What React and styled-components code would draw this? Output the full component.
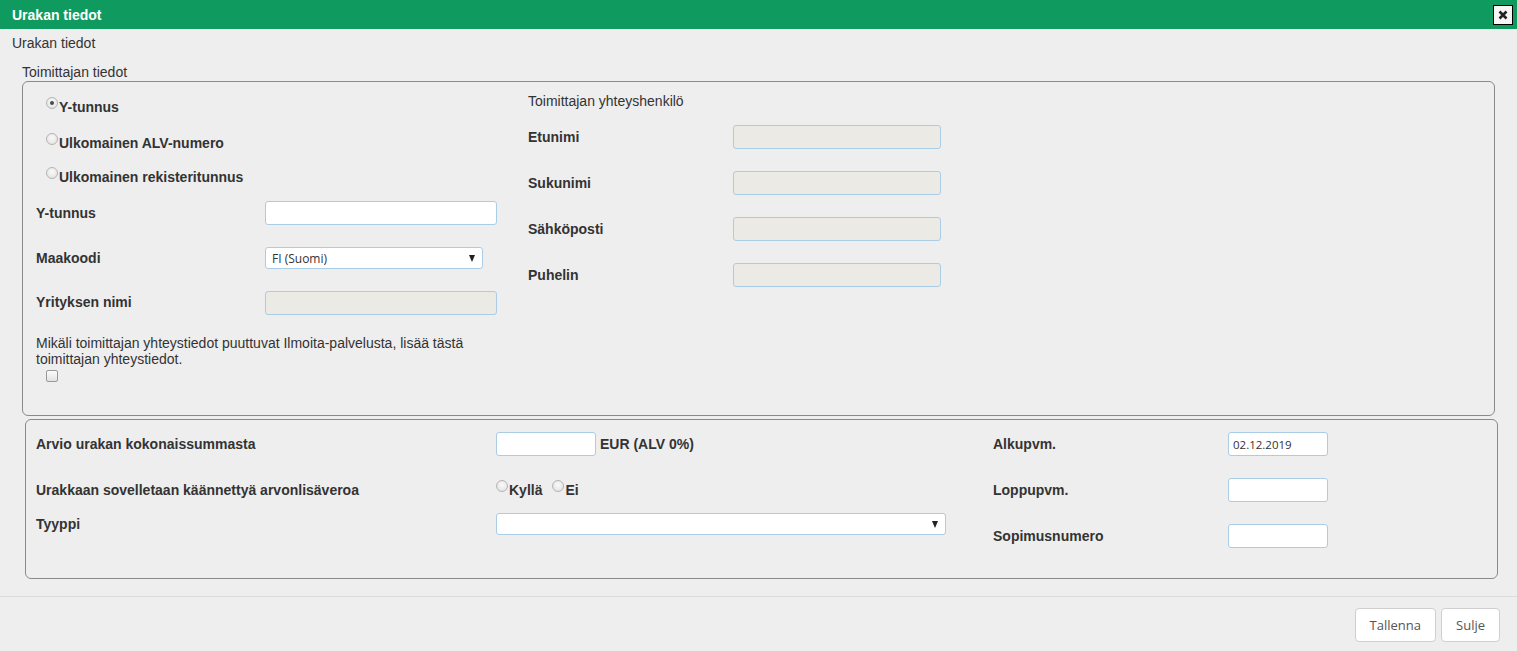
import React from 'react';
import styled, { createGlobalStyle } from 'styled-components';

const GlobalStyle = createGlobalStyle`
  html, body {
    margin: 0;
    padding: 0;
    background: #eeeeee;
    font-family: "Liberation Sans", Arial, sans-serif;
    color: #333;
    overflow: hidden;
  }
`;

const Page = styled.div`
  width: 1517px;
  height: 651px;
  background: #eeeeee;
  display: flex;
  flex-direction: column;
`;

const Header = styled.div`
  height: 29px;
  background: #0f9a60;
  display: flex;
  align-items: center;
  justify-content: space-between;
  padding: 0 4px 0 12px;
  box-sizing: border-box;
`;

const HeaderTitle = styled.div`
  color: #fff;
  font-weight: bold;
  font-size: 14px;
`;

const CloseButton = styled.button`
  width: 20px;
  height: 20px;
  padding: 0;
  border: 1px solid #000;
  background: #f6f6f6;
  display: flex;
  align-items: center;
  justify-content: center;
  box-sizing: border-box;
`;

const PageTitle = styled.div`
  font-size: 14px;
  line-height: 16px;
  margin: 6px 0 0 12px;
`;

const Legend = styled.div`
  font-size: 14px;
  line-height: 16px;
  margin: 13px 0 0 22px;
`;

const Fieldset = styled.div`
  border: 1px solid #8a8a8a;
  border-radius: 6px;
  margin: ${p => p.$margin};
  padding: ${p => p.$padding};
  display: flex;
`;

const Column = styled.div`
  display: flex;
  flex-direction: column;
  width: ${p => p.$w}px;
`;

const Row = styled.div`
  display: flex;
  align-items: center;
  height: ${p => p.$h || 24}px;
  margin-top: ${p => p.$mt || 0}px;
`;

const Label = styled.div`
  font-weight: bold;
  font-size: 14px;
  width: ${p => p.$w}px;
  flex-shrink: 0;
  margin-top: ${p => p.$up ? -3 : -1}px;
  margin-left: ${p => p.$ml || 0}px;
`;

const SubHeading = styled.div`
  font-size: 14px;
  line-height: 16px;
  margin-top: ${p => p.$mt}px;
`;

const Note = styled.div`
  font-size: 14px;
  line-height: 16px;
  margin-top: ${p => p.$mt}px;
  width: 460px;
`;

const TextInput = styled.div`
  width: ${p => p.$w}px;
  height: 24px;
  box-sizing: border-box;
  border: 1px solid #a9cde6;
  border-radius: 3px;
  background: ${p => p.$disabled ? '#ebeae4' : '#fff'};
  font-family: "Open Sans", sans-serif;
  font-size: 11.5px;
  display: flex;
  align-items: center;
  padding-left: 4px;
`;

const Select = styled.div`
  width: ${p => p.$w}px;
  height: 22px;
  box-sizing: border-box;
  border: 1px solid #a9cde6;
  border-radius: 3px;
  background: #fff;
  font-family: "Open Sans", sans-serif;
  font-size: 12px;
  display: flex;
  align-items: center;
  justify-content: space-between;
  padding: 0 7px 0 6px;
`;

const Arrow = styled.span`
  width: 0;
  height: 0;
  border-left: 3.5px solid transparent;
  border-right: 3.5px solid transparent;
  border-top: 7px solid #222;
`;

const RadioLabel = styled.label`
  display: flex;
  align-items: center;
  font-weight: bold;
  font-size: 14px;
  margin-left: ${p => p.$ml || 0}px;
`;

const RadioDot = styled.span`
  width: 12px;
  height: 12px;
  box-sizing: border-box;
  border-radius: 50%;
  border: 1px solid #b4b4b4;
  background: radial-gradient(circle at 50% 40%, #fafafa, #dedede);
  margin-top: -8px;
  margin-right: 1px;
  display: flex;
  align-items: center;
  justify-content: center;
  &::after {
    content: '';
    width: 4px;
    height: 4px;
    border-radius: 50%;
    background: ${p => p.$checked ? '#4a4a4a' : 'transparent'};
  }
`;

const Checkbox = styled.span`
  display: block;
  width: 12px;
  height: 12px;
  box-sizing: border-box;
  border: 1px solid #999;
  border-radius: 2px;
  background: linear-gradient(#fbfbfb, #e2e2e2);
  margin: 3px 0 0 10px;
`;

const Divider = styled.div`
  height: 1px;
  background: #dcdcdc;
  margin-top: 17px;
`;

const Footer = styled.div`
  display: flex;
  justify-content: flex-end;
  gap: 5px;
  padding: 11px 17px 0 0;
`;

const Button = styled.button`
  height: 34px;
  padding: 0 14px;
  border: 1px solid #cfcfcf;
  border-radius: 4px;
  background: #fff;
  color: #555;
  font-family: "Open Sans", sans-serif;
  font-size: 13px;
`;

const Radio = ({ checked, children, ml }) => (
  <RadioLabel $ml={ml}>
    <RadioDot $checked={checked} />
    {children}
  </RadioLabel>
);

export default function App() {
  return (
    <Page>
      <GlobalStyle />
      <Header>
        <HeaderTitle>Urakan tiedot</HeaderTitle>
        <CloseButton>
          <svg width="10" height="10" viewBox="0 0 10 10">
            <path d="M1.5 1.5 L8.5 8.5 M8.5 1.5 L1.5 8.5" stroke="#222" strokeWidth="2.6" />
          </svg>
        </CloseButton>
      </Header>

      <PageTitle>Urakan tiedot</PageTitle>
      <Legend>Toimittajan tiedot</Legend>

      <Fieldset $margin="1px 22px 0 22px" $padding="0 0 33px 13px">
        <Column $w={492}>
          <Row $h={20} $mt={15}><Radio checked ml={10}>Y-tunnus</Radio></Row>
          <Row $h={20} $mt={16}><Radio ml={10}>Ulkomainen ALV-numero</Radio></Row>
          <Row $h={20} $mt={14}><Radio ml={10}>Ulkomainen rekisteritunnus</Radio></Row>
          <Row $mt={14}>
            <Label $w={229}>Y-tunnus</Label>
            <TextInput $w={232} />
          </Row>
          <Row $h={22} $mt={22}>
            <Label $w={229}>Maakoodi</Label>
            <Select $w={218}>FI (Suomi)<Arrow /></Select>
          </Row>
          <Row $mt={22}>
            <Label $w={229} $up>Yrityksen nimi</Label>
            <TextInput $w={232} $disabled />
          </Row>
          <Note $mt={20}>
            Mikäli toimittajan yhteystiedot puuttuvat Ilmoita-palvelusta, lisää tästä toimittajan yhteystiedot.
          </Note>
          <Checkbox />
        </Column>

        <Column $w={420}>
          <SubHeading $mt={11}>Toimittajan yhteyshenkilö</SubHeading>
          <Row $mt={16}>
            <Label $w={205}>Etunimi</Label>
            <TextInput $w={208} $disabled />
          </Row>
          <Row $mt={22}>
            <Label $w={205}>Sukunimi</Label>
            <TextInput $w={208} $disabled />
          </Row>
          <Row $mt={22}>
            <Label $w={205}>Sähköposti</Label>
            <TextInput $w={208} $disabled />
          </Row>
          <Row $mt={22}>
            <Label $w={205}>Puhelin</Label>
            <TextInput $w={208} $disabled />
          </Row>
        </Column>
      </Fieldset>

      <Fieldset $margin="3px 19px 0 25px" $padding="12px 0 30px 10px">
        <Column $w={957}>
          <Row>
            <Label $w={460}>Arvio urakan kokonaissummasta</Label>
            <TextInput $w={100} />
            <Label $w={120} $ml={4}>EUR (ALV 0%)</Label>
          </Row>
          <Row $mt={22}>
            <Label $w={460}>Urakkaan sovelletaan käännettyä arvonlisäveroa</Label>
            <Radio>Kyllä</Radio>
            <Radio ml={10}>Ei</Radio>
          </Row>
          <Row $h={22} $mt={11}>
            <Label $w={460}>Tyyppi</Label>
            <Select $w={450}><span /><Arrow /></Select>
          </Row>
        </Column>
        <Column $w={340}>
          <Row>
            <Label $w={235}>Alkupvm.</Label>
            <TextInput $w={100}>02.12.2019</TextInput>
          </Row>
          <Row $mt={22}>
            <Label $w={235}>Loppupvm.</Label>
            <TextInput $w={100} />
          </Row>
          <Row $mt={22}>
            <Label $w={235}>Sopimusnumero</Label>
            <TextInput $w={100} />
          </Row>
        </Column>
      </Fieldset>

      <Divider />
      <Footer>
        <Button>Tallenna</Button>
        <Button>Sulje</Button>
      </Footer>
    </Page>
  );
}
